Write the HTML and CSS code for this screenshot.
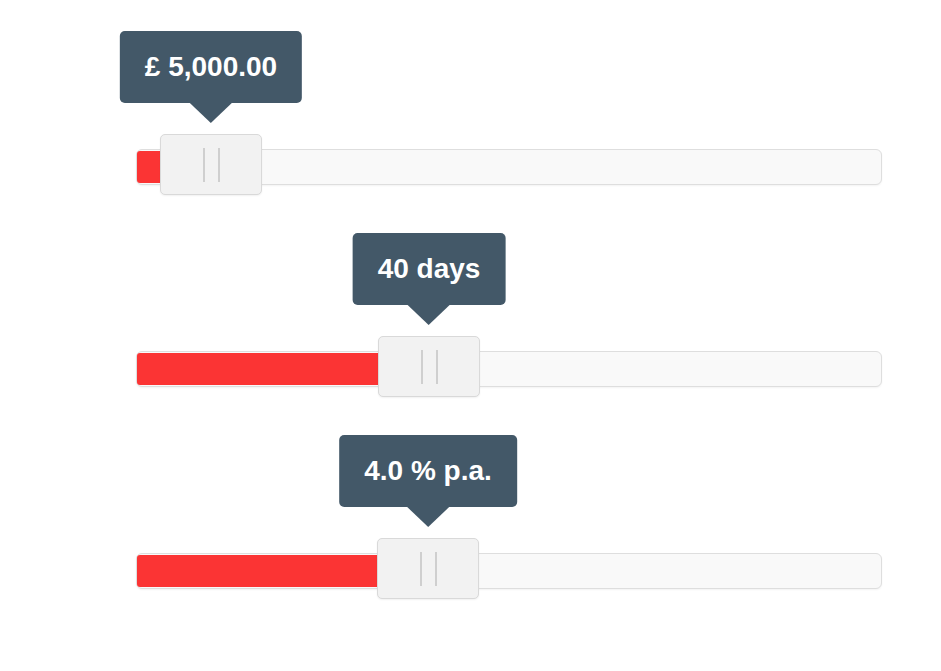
FILE: index.html
```html
<!DOCTYPE html>
<html lang="en">
<head>
    <meta charset="UTF-8">
    <title>Loan sliders</title>
    <link rel="stylesheet" href="styles.css">
</head>
<body>

<main class="sliders">
    <div class="slider">
        <div class="fill" style="width: 60px"></div>
        <div class="handle" style="left: 23px">
            <span class="grip"></span>
            <div class="tip">£ 5,000.00</div>
        </div>
    </div>

    <div class="slider">
        <div class="fill" style="width: 280px"></div>
        <div class="handle" style="left: 241px">
            <span class="grip"></span>
            <div class="tip">40 days</div>
        </div>
    </div>

    <div class="slider">
        <div class="fill" style="width: 280px"></div>
        <div class="handle" style="left: 240px">
            <span class="grip"></span>
            <div class="tip">4.0 % p.a.</div>
        </div>
    </div>
</main>

</body>
</html>
```

FILE: styles.css
```css
body {
    margin: 0;
    padding: 0;
    background-color: #ffffff;
    font-family: 'Liberation Sans', Arial, sans-serif;
}

.sliders {
    padding-top: 149px;
}

.slider {
    position: relative;
    height: 34px;
    margin: 0 59px 166px 136px;
    background-color: #f9f9f9;
    border: 1px solid #dedede;
    border-radius: 6px;
    box-shadow: 0 1px 2px rgba(0, 0, 0, 0.05);
}

.slider:last-child {
    margin-bottom: 40px;
}

.fill {
    height: 32px;
    margin-top: 1px;
    background-color: #fb3434;
    border-radius: 3px 0 0 3px;
}

.handle {
    position: absolute;
    top: -16px;
    width: 100px;
    height: 59px;
    background-color: #f2f2f2;
    border: 1px solid #d9d9d9;
    border-radius: 5px;
    box-shadow: 0 1px 2px rgba(0, 0, 0, 0.06);
}

.grip {
    position: absolute;
    left: 42px;
    top: 13px;
    width: 13px;
    height: 34px;
    border-left: 2px solid #cfcfcf;
    border-right: 2px solid #cfcfcf;
}

.tip {
    position: absolute;
    left: 50%;
    bottom: calc(100% + 32px);
    transform: translateX(-50%);
    padding: 0 25px;
    height: 72px;
    line-height: 72px;
    white-space: nowrap;
    background-color: #435868;
    color: #ffffff;
    font-size: 28px;
    font-weight: bold;
    border-radius: 5px;
}

.tip::after {
    content: "";
    position: absolute;
    left: 50%;
    top: 100%;
    margin-left: -21px;
    border-left: 21px solid transparent;
    border-right: 21px solid transparent;
    border-top: 20px solid #435868;
}
```
